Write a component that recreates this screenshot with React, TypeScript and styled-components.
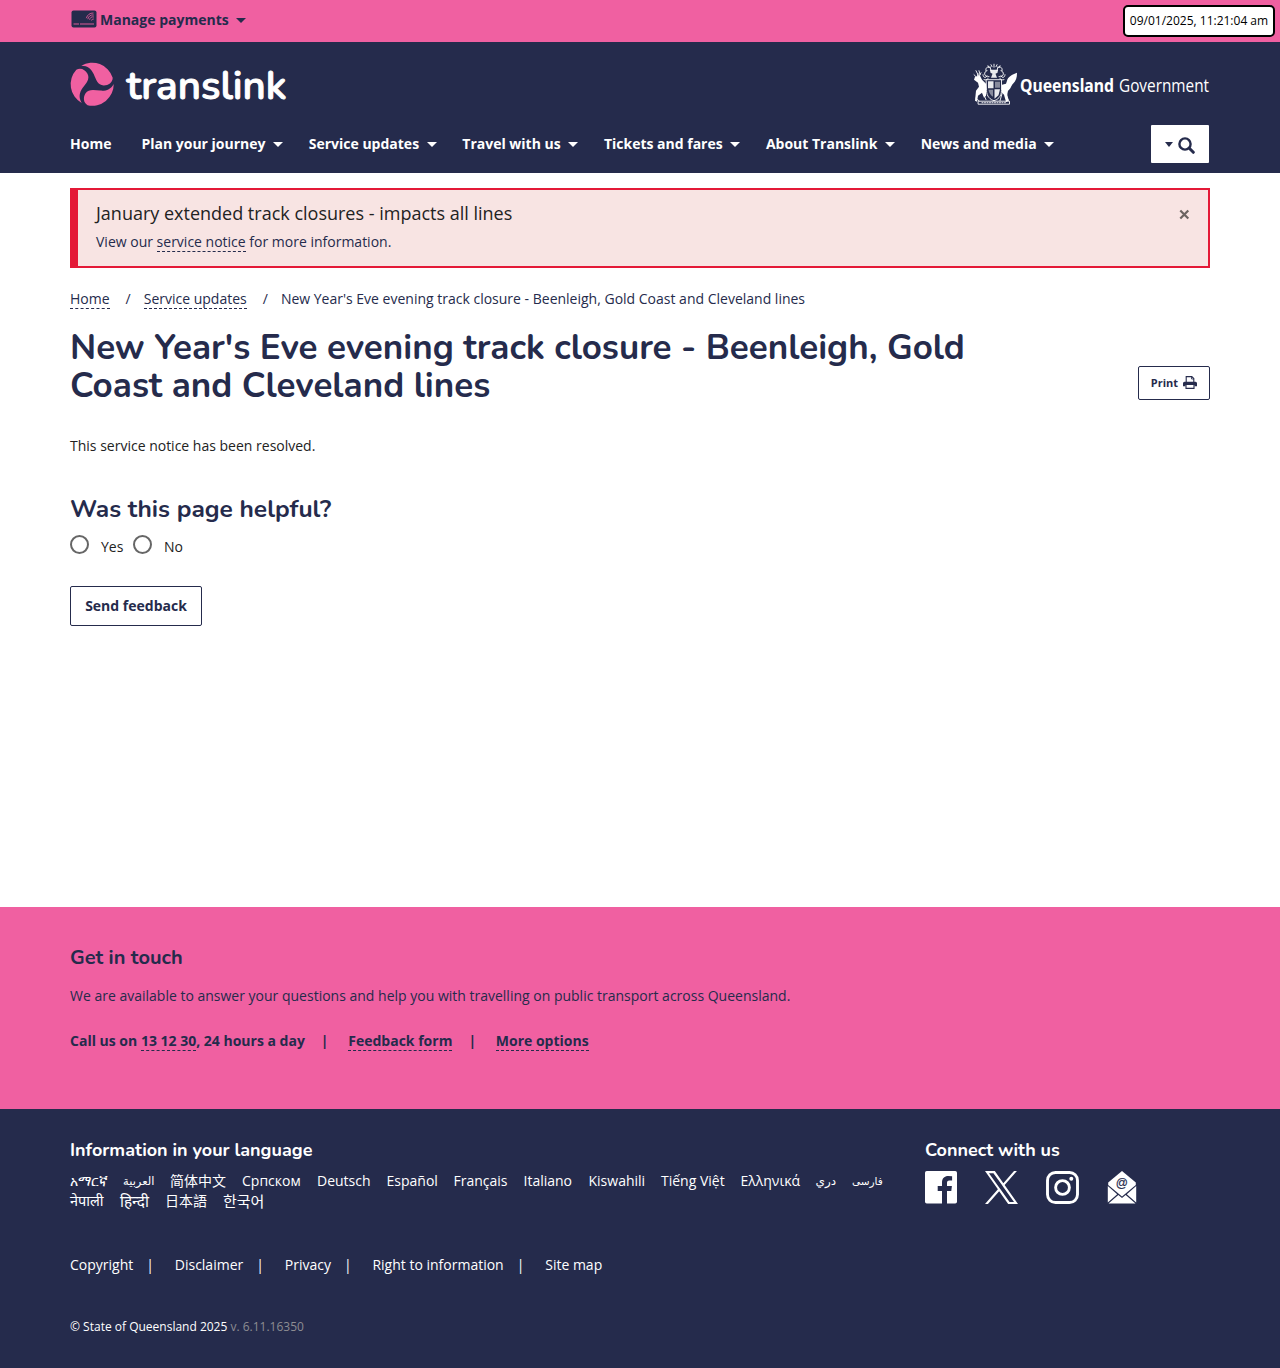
import React from 'react';
import styled, { createGlobalStyle } from 'styled-components';

const navy = '#252b4c';
const pink = '#f060a1';
const body = '"Open Sans", "Noto Sans", "DejaVu Sans", "Noto Sans CJK SC", "Noto Sans CJK JP", "Noto Sans CJK KR", sans-serif';
const round = 'Nunito, Lato, "Open Sans", sans-serif';

const Global = createGlobalStyle`
  * { box-sizing: border-box; }
  body { margin: 0; background: #fff; color: #222; font: 400 14px/20px ${body}; }
  a { color: inherit; text-decoration: none; }
  h1, h2, h3, h4, p, ul { margin: 0; padding: 0; }
  ul { list-style: none; }
  button { font-family: inherit; }
`;

const Page = styled.div`
  width: 1280px;
  min-height: 1368px;
  display: flex;
  flex-direction: column;
`;
const Container = styled.div`
  width: 1140px;
  margin: 0 auto;
`;
const TopBar = styled.div`
  height: 42px;
  background: ${pink};
  color: ${navy};
  position: relative;
`;
const Payments = styled.a`
  display: inline-flex;
  align-items: center;
  height: 40px;
  padding-left: 1px;
  font-weight: 700;
  svg { margin: -2px 3px 0 0; }
`;
const Clock = styled.div`
  position: absolute;
  top: 5px;
  right: 5px;
  width: 152px;
  height: 32px;
  border: 2px solid #000;
  border-radius: 5px;
  background: #fff;
  color: #000;
  font-size: 12px;
  line-height: 28px;
  text-align: center;
  white-space: nowrap;
`;
const Caret = styled.span<{ $small?: boolean; $gap?: number }>`
  display: inline-block;
  margin-left: ${p => p.$gap ?? 7.5}px;
  margin-bottom: ${p => (p.$small ? 2 : 0)}px;
  border-style: solid;
  border-color: currentColor transparent transparent;
  border-width: ${p => (p.$small ? '5px 4.5px 0' : '5px 5px 0')};
`;
const Header = styled.header`
  height: 131px;
  background: ${navy};
  color: #fff;
`;
const Brands = styled.div`
  display: flex;
  justify-content: space-between;
  height: 83px;
  padding-top: 18px;
  svg { display: block; overflow: visible; }
`;
const Nav = styled.nav`
  display: flex;
  height: 38px;
  align-items: center;
`;
const NavItem = styled.a<{ $gap: number }>`
  display: flex;
  align-items: center;
  margin-right: ${p => p.$gap}px;
  font-weight: 700;
  white-space: nowrap;
  ${Caret} { margin-top: 1px; }
`;
const SearchToggle = styled.button`
  display: flex;
  align-items: center;
  justify-content: center;
  gap: 5px;
  margin-left: auto;
  margin-right: 1px;
  width: 58px;
  height: 38px;
  padding: 2px 0 0;
  border: 0;
  border-radius: 1px;
  background: #fff;
  color: ${navy};
`;
const Main = styled.main`
  height: 734px;
  padding-top: 15px;
`;
const Alert = styled.section`
  display: flex;
  justify-content: space-between;
  height: 80px;
  padding: 13px 18px 0;
  border: 2px solid #e41937;
  border-left-width: 8px;
  background: #f8e4e3;
`;
const AlertTitle = styled.h4`
  font-size: 18px;
  line-height: 20px;
  font-weight: 400;
  margin-bottom: 9px;
`;
const AlertText = styled.p`
  color: ${navy};
`;
const Close = styled.button`
  height: 22px;
  padding: 0;
  border: 0;
  background: none;
  color: #6b6361;
  display: flex;
  align-items: center;
`;
const Dashed = styled.a`
  display: inline-block;
  line-height: 18px;
  border-bottom: 1px dashed currentColor;
`;
const Crumbs = styled.nav`
  display: flex;
  align-items: baseline;
  margin-top: 21px;
  color: ${navy};
`;
const Slash = styled.span`
  margin: 0 13px 0 16px;
`;
const TitleRow = styled.div`
  display: flex;
  justify-content: space-between;
  align-items: flex-start;
  margin-top: 20px;
  height: 75px;
`;
const Title = styled.h1`
  color: ${navy};
  font: 700 35px/38px ${round};
  width: 912px;
`;
const Print = styled.button`
  display: flex;
  align-items: center;
  justify-content: center;
  gap: 5px;
  width: 72px;
  height: 34px;
  margin-top: 37px;
  padding: 0 0 1px;
  border: 1px solid ${navy};
  border-radius: 2px;
  background: #fff;
  color: ${navy};
  font-size: 11px;
  font-weight: 700;
`;
const Notice = styled.p`
  margin-top: 32px;
`;
const Question = styled.h2`
  margin-top: 40px;
  color: ${navy};
  font: 700 24.5px/26px ${round};
`;
const Choices = styled.div`
  display: flex;
  margin-top: 13px;
`;
const Choice = styled.label`
  display: flex;
  margin-right: 9.5px;
  padding-top: 2px;
`;
const Radio = styled.span`
  width: 19px;
  height: 19px;
  margin: -2px 12px 0 0;
  border: 2px solid #666;
  border-radius: 50%;
`;
const Send = styled.button`
  display: block;
  width: 132px;
  height: 40px;
  margin-top: 29px;
  padding: 0 0 2px;
  border: 1px solid ${navy};
  border-radius: 2px;
  background: #fff;
  color: ${navy};
  font-size: 14px;
  font-weight: 700;
`;
const Touch = styled.section`
  height: 202px;
  padding-top: 39px;
  background: ${pink};
  color: ${navy};
`;
const TouchTitle = styled.h3`
  font: 700 20px/24px ${round};
  margin-bottom: 16px;
`;
const Contacts = styled.div`
  display: flex;
  align-items: baseline;
  margin-top: 25px;
  font-weight: 700;
`;
const Pipe = styled.span<{ $l?: number; $r?: number }>`
  margin: 0 ${p => p.$r ?? 19.7}px 0 ${p => p.$l ?? 16}px;
`;
const Footer = styled.footer`
  height: 259px;
  padding-top: 30px;
  background: ${navy};
  color: #fff;
`;
const Columns = styled.div`
  display: grid;
  grid-template-columns: 855px 1fr;
  height: 116px;
`;
const FootTitle = styled.h3`
  font: 700 18px/22px ${round};
`;
const Langs = styled.ul`
  display: flex;
  flex-wrap: wrap;
  margin-top: 10px;
`;
const Lang = styled.li<{ $w: number; $size?: number }>`
  width: ${p => p.$w}px;
  height: 20px;
  font-size: ${p => p.$size ?? 14}px;
  white-space: nowrap;
`;
const Social = styled.div`
  display: flex;
  margin-top: 10px;
  svg { display: block; }
`;
const Links = styled.div`
  display: flex;
`;
const Legal = styled.p`
  margin-top: 42px;
  font-size: 12px;
  span { color: #8d8d92; }
`;

const nav: [string, number][] = [
  ['Home', 30],
  ['Plan your journey', 25.7],
  ['Service updates', 25.7],
  ['Travel with us', 25.7],
  ['Tickets and fares', 25.7],
  ['About Translink', 25.7],
  ['News and media', 0],
];

const langs: [string, number, number?][] = [
  ['አማርኛ', 53], ['العربية', 47, 11.5], ['简体中文', 72], ['Српском', 75], ['Deutsch', 69.5],
  ['Español', 67], ['Français', 70], ['Italiano', 65], ['Kiswahili', 72.5], ['Tiếng Việt', 79.5],
  ['Ελληνικά', 75], ['دري', 36.5, 12], ['فارسی', 34, 10.5],
  ['नेपाली', 50, 14.5], ['हिन्दी', 45, 15.3], ['日本語', 58], ['한국어', 50, 15],
];

const CardIcon = () => (
  <svg width="26" height="18" viewBox="0 0 26 18">
    <rect x="0.5" y="0.5" width="25" height="17" rx="2" fill={navy} />
    <path d="M2.500 14h5.500M9 14h14" stroke={pink} strokeWidth="0.9" />
    <g fill="none" stroke={pink} strokeWidth="0.8">
      <path d="M15.300 8.200A7.500 7.500 0 0 1 22.500 3M16.800 9.200A5.500 5.500 0 0 1 22.800 5M18.600 9.800A3.600 3.600 0 0 1 22.900 7M20.500 10.500A2 2 0 0 1 22.800 9" />
    </g>
  </svg>
);

const blade = 'M-11-18.5A21.5 21.5 0 0 1 20.5-6.5C20.5-1.5 16 1.3 11.5 1.2C5.5 1 3.8-5 1.6-10C-.8-15.3-4.5-18.6-11-18.5Z';
const TranslinkLogo = () => (
  <svg width="220" height="50" viewBox="70 60 220 50">
    <g fill={pink} transform="translate(92.2 84.2)">
      <path d={blade} />
      <path d={blade} transform="rotate(120)" />
      <path d={blade} transform="rotate(240)" />
    </g>
    <text x="126.500" y="98.800" textLength="160" lengthAdjust="spacingAndGlyphs" fill="#fff" stroke="#fff" strokeWidth="1" strokeLinejoin="round" fontFamily="Nunito, Lato, sans-serif" fontWeight="600" fontSize="40">translink</text>
  </svg>
);

const GovLogo = () => (
  <svg width="238" height="46" viewBox="972 60 238 46">
    <g transform="translate(0 .7)">
      <g fill="none" stroke="#fff" strokeWidth="0.9" strokeLinecap="round">
        <path d="M974 74l3 3 1-4M976 70l3 6 2-4M979 70l1 4M989 76c-5 1-6-5-2-6M999 76c5 1 6-5 2-6M986 70c-1-3 2-5 4-3M1002 70c1-3-2-5-4-3M991 70l-1-4M997 70l1-4M988 65l1 2M994 63.500v3M1000 65l-1 2M991 64l1 2M997 64l-1 2" />
        <path d="M987 75c-1 3-4 2-4-1M1001 75c1 3 4 2 4-1M984 79c2 1 3-1 4-1M1004 79c-2 1-3-1-4-1" />
        <path d="M978 90l-2 8 3 2M983 92l3 7M1006 91l2 8-2 2M1002 93l-2 7" />
        <path d="M986.500 79h15v11c0 6-4 9-7.500 10-3.500-1-7.500-4-7.500-10z" />
        <path d="M978.500 100.500h31v3h-31z" />
        <path d="M982 102h24" strokeDasharray="1 1.500" />
      </g>
      <g fill="#fff">
        <path d="M975 76l5-1 2 4 4 4v12l-2 2-2-5-4 3-1 6-2-1 1-10 3-4-1-4-4-3z" />
        <path d="M1017 72c0 5-1 8-4 11-2 2-2 5-5 7l-1 5 2 5-3 1-2-7-2-2v-8l4-1 1-3c1-4 5-6 10-8z" />
        <path d="M988 80.500h5.500v7H988zM994.500 88.500h5.500l-1.500 6-4 3.500zM990 69h8l-.5 3-2 1 1.500 4h-6l1.500-4-2-1z" opacity=".9" />
        <path d="M995 81h5v6h-5zM988.500 89h4.500v7c-2.500-1.500-4-4-4.500-7z" opacity=".45" />
      </g>
    </g>
    <text x="1020" y="92" textLength="94" lengthAdjust="spacingAndGlyphs" fill="#fff" fontFamily='"Noto Sans", sans-serif' fontWeight="700" fontSize="18">Queensland</text>
    <text x="1119" y="92" textLength="90" lengthAdjust="spacingAndGlyphs" fill="#fff" fontFamily='"Open Sans", sans-serif' fontWeight="400" fontSize="18">Government</text>
  </svg>
);

const SearchIcon = () => (
  <svg width="17" height="17" viewBox="0 0 17 17" fill="none" stroke={navy}>
    <circle cx="7" cy="7" r="5.600" strokeWidth="2.400" />
    <path d="M11.300 11.300l4 4" strokeWidth="3" strokeLinecap="round" />
  </svg>
);

const PrintIcon = () => (
  <svg width="14" height="13" viewBox="0 0 14 13">
    <path d="M3.200 6V.6h5.600l2 2V6" fill="none" stroke={navy} strokeWidth="1.100" />
    <path d="M8.500.6v2.400h2.400" fill="none" stroke={navy} strokeWidth=".8" />
    <path d="M1.500 5.800h11A1.500 1.500 0 0 1 14 7.300v3h-2.500V9h-9v1.300H0v-3a1.500 1.500 0 0 1 1.500-1.500z" fill={navy} />
    <path d="M3 9v3.400h8V9" fill="none" stroke={navy} strokeWidth="1.100" />
  </svg>
);

const Facebook = () => (
  <svg width="32" height="33" viewBox="0 0 32 33">
    <path fill="#fff" d="M1.800 0h28.400A1.800 1.800 0 0 1 32 1.800v28.900a1.800 1.800 0 0 1-1.800 1.800H22V20h4.300l.6-5H22v-3.100c0-1.500.4-2.400 2.500-2.400h2.600V5.200A34 34 0 0 0 23.300 5c-3.800 0-6.300 2.300-6.300 6.500V15h-4.300v5H17v12.500H1.800A1.800 1.800 0 0 1 0 30.700V1.800A1.800 1.800 0 0 1 1.800 0z" />
  </svg>
);
const XLogo = () => (
  <svg width="33" height="33" viewBox="0 0 1200 1227" preserveAspectRatio="none">
    <path fill="#fff" d="M714.163 519.284L1160.890 0H1055.030L667.137 450.887L357.328 0H0L468.492 681.821L0 1226.370H105.866L515.491 750.218L842.672 1226.370H1200L714.137 519.284H714.163ZM569.165 687.828L521.697 619.934L144.011 79.694H306.615L611.412 515.685L658.880 583.579L1055.080 1150.300H892.476L569.165 687.854V687.828Z" />
  </svg>
);
const Instagram = () => (
  <svg width="33" height="33" viewBox="0 0 33 33" fill="none" stroke="#fff" strokeWidth="2.900">
    <rect x="1.500" y="1.500" width="30" height="30" rx="8" />
    <circle cx="16.500" cy="16.500" r="6.900" />
    <circle cx="25.300" cy="7.800" r="2" fill="#fff" stroke="none" />
  </svg>
);
const Mail = () => (
  <svg width="30" height="33" viewBox="0 0 30 33">
    <path fill="#fff" d="M15 0l13.800 11.500v2.500L15 25.500 1.200 14v-2.500z" />
    <path fill="#fff" d="M.8 15l9.400 8.300L.8 31.500zM29.200 15l-9.400 8.300 9.400 8.200zM1.500 32.500L11.300 24l3.700 3 3.700-3 9.800 8.500z" />
    <text x="14.800" y="16.300" fontSize="12" fontWeight="400" textAnchor="middle" fontFamily='"Liberation Sans", sans-serif' fill={navy} stroke={navy} strokeWidth="0.2">@</text>
  </svg>
);
const Spacer = styled.span<{ $w: number }>`
  width: ${p => p.$w}px;
`;

export default function App() {
  return (
    <Page>
      <Global />
      <TopBar>
        <Container>
          <Payments href="#"><CardIcon />Manage payments<Caret /></Payments>
        </Container>
        <Clock>09/01/2025, 11:21:04 am</Clock>
      </TopBar>
      <Header>
        <Container>
          <Brands><TranslinkLogo /><GovLogo /></Brands>
          <Nav>
            {nav.map(([label, gap], i) => (
              <NavItem key={label} href="#" $gap={gap}>{label}{i > 0 && <Caret />}</NavItem>
            ))}
            <SearchToggle aria-label="Search"><Caret $small $gap={0} /><SearchIcon /></SearchToggle>
          </Nav>
        </Container>
      </Header>
      <Main>
        <Container>
          <Alert>
            <div>
              <AlertTitle>January extended track closures - impacts all lines</AlertTitle>
              <AlertText>View our <Dashed href="#">service notice</Dashed> for more information.</AlertText>
            </div>
            <Close aria-label="Close">
              <svg width="11" height="11" viewBox="0 0 11 11"><path d="M1.300 1.500l8 8M9.300 1.500l-8 8" stroke="currentColor" strokeWidth="2.200" /></svg>
            </Close>
          </Alert>
          <Crumbs>
            <Dashed href="#">Home</Dashed><Slash>/</Slash>
            <Dashed href="#">Service updates</Dashed><Slash>/</Slash>
            <span>New Year's Eve evening track closure - Beenleigh, Gold Coast and Cleveland lines</span>
          </Crumbs>
          <TitleRow>
            <Title>New Year's Eve evening track closure - Beenleigh, Gold Coast and Cleveland lines</Title>
            <Print>Print <PrintIcon /></Print>
          </TitleRow>
          <Notice>This service notice has been resolved.</Notice>
          <Question>Was this page helpful?</Question>
          <Choices>
            <Choice><Radio />Yes</Choice>
            <Choice><Radio />No</Choice>
          </Choices>
          <Send>Send feedback</Send>
        </Container>
      </Main>
      <Touch>
        <Container>
          <TouchTitle>Get in touch</TouchTitle>
          <p>We are available to answer your questions and help you with travelling on public transport across Queensland.</p>
          <Contacts>
            <span>Call us on <Dashed href="#">13 12 30</Dashed>, 24 hours a day</span>
            <Pipe>|</Pipe><Dashed href="#">Feedback form</Dashed>
            <Pipe>|</Pipe><Dashed href="#">More options</Dashed>
          </Contacts>
        </Container>
      </Touch>
      <Footer>
        <Container>
          <Columns>
            <div>
              <FootTitle>Information in your language</FootTitle>
              <Langs>{langs.map(([t, w, s]) => <Lang key={t} $w={w} $size={s}>{t}</Lang>)}</Langs>
            </div>
            <div>
              <FootTitle>Connect with us</FootTitle>
              <Social><Facebook /><Spacer $w={28} /><XLogo /><Spacer $w={28} /><Instagram /><Spacer $w={28} /><Mail /></Social>
            </div>
          </Columns>
          <Links>
            <a href="#">Copyright</a><Pipe $l={13} $r={20.8}>|</Pipe>
            <a href="#">Disclaimer</a><Pipe $l={13} $r={20.8}>|</Pipe>
            <a href="#">Privacy</a><Pipe $l={13} $r={20.8}>|</Pipe>
            <a href="#">Right to information</a><Pipe $l={13} $r={20.8}>|</Pipe>
            <a href="#">Site map</a>
          </Links>
          <Legal>© State of Queensland 2025 <span>v. 6.11.16350</span></Legal>
        </Container>
      </Footer>
    </Page>
  );
}
